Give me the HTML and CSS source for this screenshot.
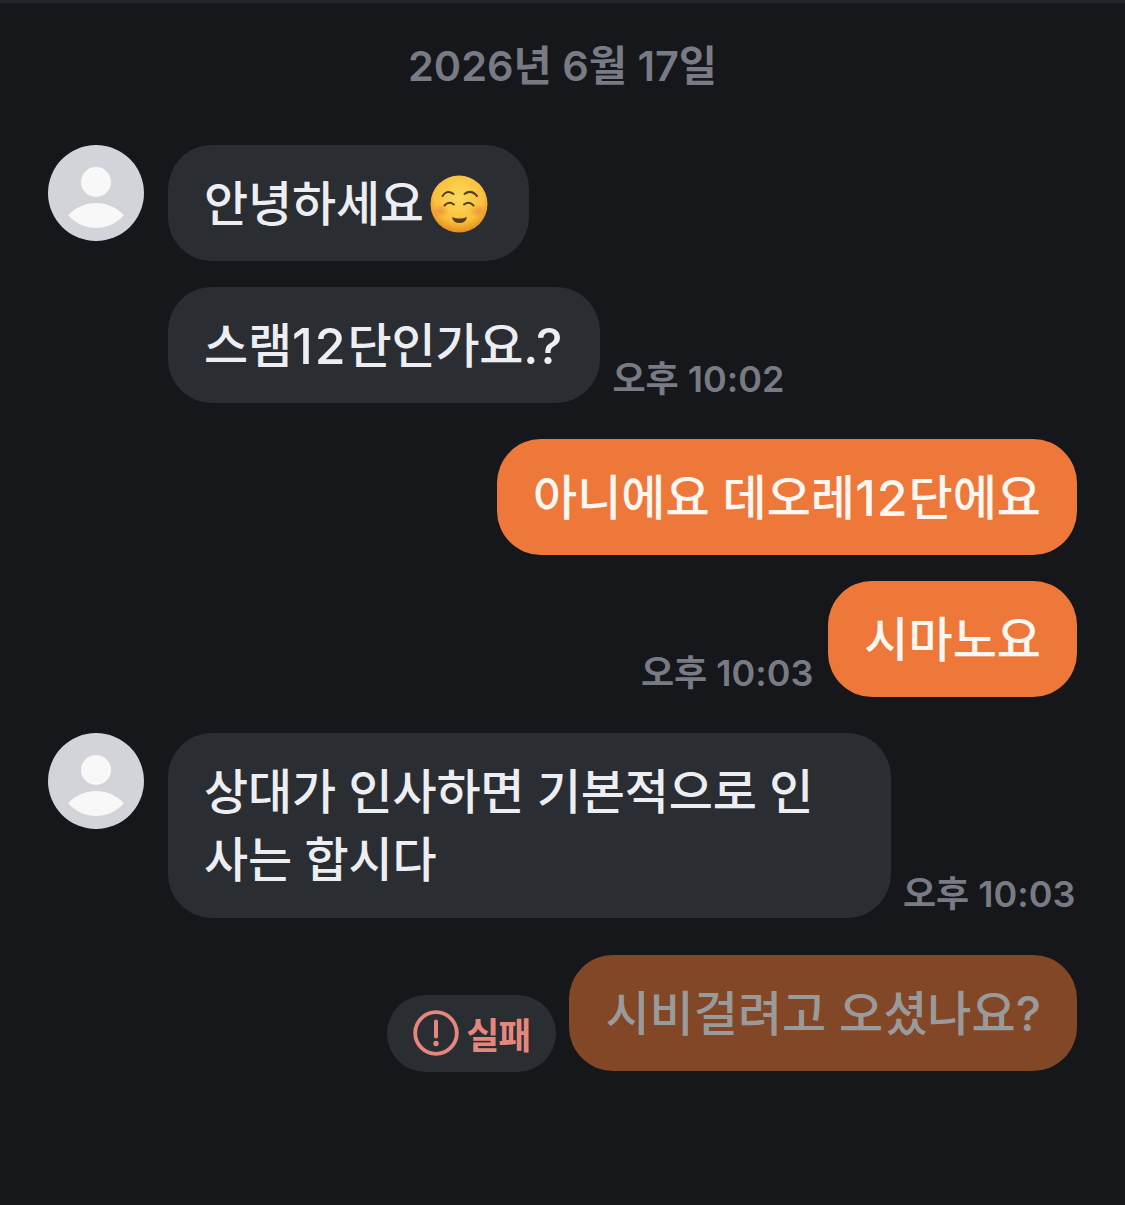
FILE: index.html
```html
<html>
  <head>
    <title>Chat</title>
    <link rel="stylesheet" href="styles.css">
  </head>
  <body>
	<div class="chat">
		<div class="date">2026년 6월 17일</div>

		<div class="group">
			<div class="avatar">
				<svg viewBox="0 0 96 96" width="96" height="96">
					<circle cx="48" cy="37" r="15" fill="#f8f8f9"/>
					<path d="M20 70C28 62 38 58 48 58C58 58 68 62 76 70C68 79 58 83 48 83C38 83 28 79 20 70Z" fill="#f8f8f9"/>
				</svg>
			</div>
			<div class="messages">
				<div class="row">
					<div class="bubble in">안녕하세요<svg class="emoji" viewBox="0 0 58 58" width="58" height="58">
						<defs>
							<radialGradient id="face" cx="0.5" cy="0.38" r="0.64">
								<stop offset="0" stop-color="#fdd95c"/>
								<stop offset="0.68" stop-color="#f9c03c"/>
								<stop offset="1" stop-color="#df881b"/>
							</radialGradient>
							<radialGradient id="blush">
								<stop offset="0" stop-color="#ee7a3c" stop-opacity="0.6"/>
								<stop offset="1" stop-color="#ee7a3c" stop-opacity="0"/>
							</radialGradient>
						</defs>
						<circle cx="29" cy="29" r="28.5" fill="url(#face)"/>
						<ellipse cx="10" cy="36" rx="9" ry="7" fill="url(#blush)"/>
						<ellipse cx="48" cy="36" rx="9" ry="7" fill="url(#blush)"/>
						<path d="M12.5 21Q17 14 23.5 19M34.5 19Q41 14 47 21" fill="none" stroke="#5a3d1e" stroke-width="2" stroke-linecap="round"/>
						<path d="M14.5 30.5Q19 25.5 24 29.5M34 29.5Q39 25.5 43.5 30.5" fill="none" stroke="#5a3d1e" stroke-width="2" stroke-linecap="round"/>
						<path d="M22 42Q29 45 37 42Q36 48 29.5 48Q23 48 22 42Z" fill="#5a3d1e"/>
					</svg></div>
				</div>
				<div class="row">
					<div class="bubble in">스램<span class="latin">12</span>단인가요<span class="latin">.?</span></div>
					<span class="time">오후 10:02</span>
				</div>
			</div>
		</div>

		<div class="messages mine">
			<div class="row">
				<div class="bubble out">아니에요 데오레<span class="latin">12</span>단에요</div>
			</div>
			<div class="row">
				<span class="time">오후 10:03</span>
				<div class="bubble out">시마노요</div>
			</div>
		</div>

		<div class="group">
			<div class="avatar">
				<svg viewBox="0 0 96 96" width="96" height="96">
					<circle cx="48" cy="37" r="15" fill="#f8f8f9"/>
					<path d="M20 70C28 62 38 58 48 58C58 58 68 62 76 70C68 79 58 83 48 83C38 83 28 79 20 70Z" fill="#f8f8f9"/>
				</svg>
			</div>
			<div class="messages">
				<div class="row">
					<div class="bubble in wide">상대가 인사하면 기본적으로 인<br>사는 합시다</div>
					<span class="time">오후 10:03</span>
				</div>
			</div>
		</div>

		<div class="messages mine">
			<div class="row">
				<div class="failed">
					<svg viewBox="0 0 46 46" width="46" height="46">
						<circle cx="23" cy="23" r="20.8" fill="none" stroke="#e5877c" stroke-width="3.8"/>
						<path d="M23 11.5v15" fill="none" stroke="#e5877c" stroke-width="4" stroke-linecap="round"/>
						<circle cx="23" cy="33.5" r="2.7" fill="#e5877c"/>
					</svg>
					<span>실패</span>
				</div>
				<div class="bubble sending">시비걸려고 오셨나요?</div>
			</div>
		</div>
	</div>
  </body>
</html>
```

FILE: styles.css
```css
body {
	margin: 0;
	background-color: #15171b;
	font-family: 'Inter', 'Noto Sans CJK KR', sans-serif;
}

.chat {
	border-top: 3px solid #24262b;
	padding: 0 48px;
}

.date {
	height: 142px;
	padding-top: 35px;
	box-sizing: border-box;
	color: #787b83;
	font-size: 41.5px;
	font-weight: 600;
	line-height: 56px;
	text-align: center;
}

.group {
	display: flex;
	gap: 24px;
	margin-bottom: 36.5px;
}

.avatar {
	flex: none;
	width: 96px;
	height: 96px;
	border-radius: 50%;
	background-color: #d2d4da;
}

.avatar svg {
	display: block;
}

.messages {
	display: flex;
	flex-direction: column;
	gap: 25.5px;
	flex: 1;
}

.mine {
	margin-bottom: 36.5px;
}

.row {
	display: flex;
	align-items: flex-end;
	gap: 12px;
}

.mine .row {
	justify-content: flex-end;
	gap: 13px;
}

.mine .time {
	margin-right: 2px;
}

.bubble {
	display: flex;
	align-items: center;
	height: 116px;
	box-sizing: border-box;
	padding: 2px 36px 0;
	border-radius: 44px;
	font-size: 48px;
	font-weight: 500;
	line-height: 68px;
	letter-spacing: -0.2px;
	white-space: pre;
}

.latin {
	font-size: 50px;
	letter-spacing: 2px;
}

.in {
	background-color: #2a2d32;
	color: #eceef2;
}

.out {
	background-color: #ed783a;
	color: #fdf6f1;
	letter-spacing: 0;
}

.out .latin {
	letter-spacing: 1px;
}

.sending {
	background-color: #824726;
	color: #9a9a9a;
	letter-spacing: 0;
}

.wide {
	display: block;
	width: 723px;
	height: 185px;
	padding: 24.5px 36px;
}

.emoji {
	flex: none;
	margin: 0 5px 0 6px;
}

.time {
	color: #787b83;
	font-size: 36px;
	font-weight: 600;
	line-height: 44px;
	white-space: nowrap;
	padding-bottom: 2px;
}

.failed {
	display: flex;
	align-items: center;
	gap: 7px;
	height: 77px;
	box-sizing: border-box;
	padding: 0 26px;
	margin-bottom: -1px;
	border-radius: 39px;
	background-color: #2a2d32;
	color: #e5877c;
	font-size: 36px;
	font-weight: 700;
	letter-spacing: -1px;
}
```
